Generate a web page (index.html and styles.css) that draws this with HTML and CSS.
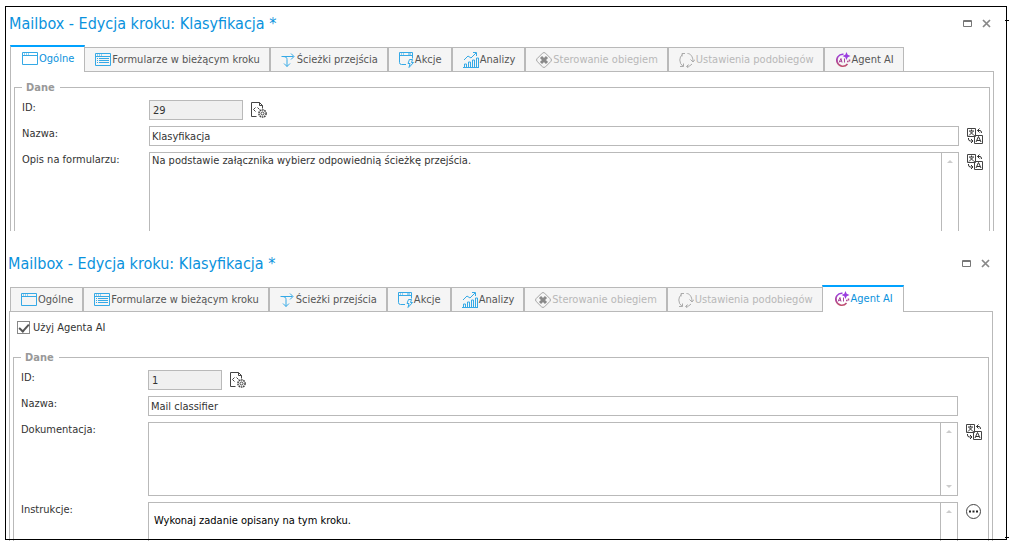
FILE: index.html
```html
<!DOCTYPE html>
<html lang="pl">
<head>
    <meta charset="UTF-8">
    <meta name="viewport" content="width=device-width, initial-scale=1.0">
    <title>Mailbox - Edycja kroku: Klasyfikacja</title>
    <link rel="stylesheet" href="styles.css">
</head>
<body>
    <svg class="sprite" aria-hidden="true">
        <symbol id="i-window" viewBox="0 0 16 14">
            <path d="M.5 .5h15v12H.5zM.5 3.5h15" fill="none" stroke="#35a9e6"/>
            <path d="M2 2h1M4 2h1M6 2h1" stroke="#35a9e6"/>
        </symbol>
        <symbol id="i-form" viewBox="0 0 16 14">
            <path d="M.5 .5h15v12H.5zM.5 3.500h15" fill="none" stroke="#35a9e6"/>
            <path d="M2 2h1M4 2h1M6 2h1M2 5.500h1M4 5.500h10M2 7.500h1M4 7.500h10M2 9.500h1M4 9.500h10" stroke="#35a9e6"/>
        </symbol>
        <symbol id="i-path" viewBox="0 0 15 16">
            <path d="M.5 4.500h12M10 1.500l3 3-3 3M2 4.500c3 0 4 1 4 3v7M3 11.500l3 3 3-3" fill="none" stroke="#35a9e6"/>
        </symbol>
        <symbol id="i-action" viewBox="0 0 15 16">
            <path d="M7 12.500H2.500Q.5 12.500 .5 10.500V.5h13v6M.5 3.500h13M2 2h1M4 2h1M9 2h3" fill="none" stroke="#35a9e6"/>
            <path d="M10.500 7.500h3l-1 3h2l-4.500 5 1-4H9z" fill="none" stroke="#35a9e6"/>
        </symbol>
        <symbol id="i-chart" viewBox="0 0 16 16">
            <path d="M0 15.500h16M1.500 15v-3h2v3M5.500 15v-5h2v5M9.500 15V8h2v7M13.500 15V6h2v9" fill="none" stroke="#35a9e6"/>
            <path d="M1 8l4-4 3 2 5-5M10 .5h3.500V4" fill="none" stroke="#35a9e6"/>
        </symbol>
        <symbol id="i-flow" viewBox="0 0 16 16">
            <path d="M6.500 1.200q1.500-1.400 3 0l5.300 5.300q1.400 1.500 0 3l-5.300 5.300q-1.500 1.400-3 0L1.200 9.500q-1.400-1.500 0-3z" fill="none" stroke="#a5a5a5"/>
            <path d="M5 5l6 6M11 5l-6 6" stroke="#8a8a8a" stroke-width="3"/>
        </symbol>
        <symbol id="i-cycle" viewBox="0 0 16 16">
            <path d="M6 1.500l-3 0v3M3.500 2.500A7 7 0 0 0 .8 8q0 4 3.200 6.300M1 14.500h3.500v-3M8.500 1.500c3 0 5.500 3 5.500 8M11.500 7.500l2.500 2.500 2-2.500M13 12q-2 2.500-5 2.500M9.500 12.500l-2 2 2 1.500" fill="none" stroke="#aaa"/>
        </symbol>
        <symbol id="i-ai" viewBox="0 0 16 16">
            <linearGradient id="ai-fill" x1="0" y1="0" x2="0" y2="1">
                <stop offset="0" stop-color="#9a3de0"/>
                <stop offset="1" stop-color="#c04f6c"/>
            </linearGradient>
            <path d="M8.500 2.300A6 6 0 1 0 12.500 12" fill="none" stroke="url(#ai-fill)" stroke-width="1.600"/>
            <path d="M4 10.500l2-4 1 4M4.800 9.300h2M9.500 6.500v4" fill="none" stroke="#a8479c"/>
            <path d="M11.500 0l1.200 2.800L15.500 4l-2.800 1.200L11.500 8l-1.200-2.800L7.500 4l2.800-1.200z" fill="#9a3de0"/>
            <path d="M14.500 7.500v2M12 9.500h1.500" stroke="#b04d90" stroke-width="1.500"/>
        </symbol>
        <symbol id="i-file" viewBox="0 0 16 16">
            <path d="M5.500 14.500h-5V.5h8l3 3v3M8.500 .5v3h3" fill="none" stroke="#444"/>
            <path d="M4.500 5.500L2.500 7.500l2 2M6.500 5.500l2 2" fill="none" stroke="#444"/>
            <circle cx="11.500" cy="11.500" r="3.600" fill="#fff" stroke="#444" stroke-width="1.500" stroke-dasharray="1.600 .7"/>
            <circle cx="11.500" cy="11.500" r="1.500" fill="none" stroke="#444"/>
        </symbol>
        <symbol id="i-translate" viewBox="0 0 16 16">
            <path d="M.5 .5h8v8h-8zM7.500 7.500h8v8h-8z" fill="#fff" stroke="#444"/>
            <path d="M2 3h5M4.500 1.500V3M6 3.500l-4 4M3 3.500l4 4" fill="none" stroke="#333"/>
            <path d="M9 14l2.500-5.500L14 14M10 12.500h3" fill="none" stroke="#333"/>
            <path d="M12.500 .5l-2 2 2 2M10.500 2.500h2.500q1.500 0 1.500 2.500M1.500 10v1q0 2 2 2h2M4 11l2 2-2 2" fill="none" stroke="#333"/>
        </symbol>
        <symbol id="i-more" viewBox="0 0 16 16">
            <circle cx="7.500" cy="7.500" r="7" fill="#fff" stroke="#444"/>
            <path d="M3 7.500h2M6.500 7.500h2M10 7.500h2" stroke="#222" stroke-width="2"/>
        </symbol>
        <symbol id="i-max" viewBox="0 0 9 9">
            <path d="M.5 1.500h8v6h-8zM.5 2.500h8" fill="none" stroke="#777"/>
        </symbol>
        <symbol id="i-close" viewBox="0 0 9 9">
            <path d="M1 1l7 7M8 1L1 8" stroke="#888" stroke-width="1.700"/>
        </symbol>
    </svg>

    <div class="frame">
        <section class="window">
            <header class="titlebar">
                <h1>Mailbox - Edycja kroku: Klasyfikacja *</h1>
                <button class="win-btn" type="button" aria-label="Maksymalizuj"><svg><use href="#i-max"/></svg></button>
                <button class="win-btn" type="button" aria-label="Zamknij"><svg><use href="#i-close"/></svg></button>
            </header>
            <nav class="tabs">
                <button class="tab active" type="button"><svg><use href="#i-window"/></svg>Ogólne</button>
                <button class="tab" type="button"><svg><use href="#i-form"/></svg>Formularze w bieżącym kroku</button>
                <button class="tab" type="button"><svg class="narrow"><use href="#i-path"/></svg>Ścieżki przejścia</button>
                <button class="tab" type="button"><svg class="narrow"><use href="#i-action"/></svg>Akcje</button>
                <button class="tab" type="button"><svg><use href="#i-chart"/></svg>Analizy</button>
                <button class="tab" type="button" disabled><svg><use href="#i-flow"/></svg>Sterowanie obiegiem</button>
                <button class="tab" type="button" disabled><svg><use href="#i-cycle"/></svg>Ustawienia podobiegów</button>
                <button class="tab" type="button"><svg><use href="#i-ai"/></svg>Agent AI</button>
            </nav>
            <div class="panel">
                <fieldset>
                    <legend>Dane</legend>
                    <div class="row">
                        <label for="step-id">ID:</label>
                        <div class="inline">
                            <input class="id-long" id="step-id" type="text" value="29" readonly>
                            <button class="icon-btn" type="button" aria-label="Identyfikator"><svg><use href="#i-file"/></svg></button>
                        </div>
                    </div>
                    <div class="row">
                        <label for="step-name">Nazwa:</label>
                        <input id="step-name" type="text" value="Klasyfikacja">
                        <button class="icon-btn" type="button" aria-label="Tłumacz nazwę"><svg><use href="#i-translate"/></svg></button>
                    </div>
                    <div class="row">
                        <label for="step-desc">Opis na formularzu:</label>
                        <div class="memo memo-open">
                            <textarea id="step-desc">Na podstawie załącznika wybierz odpowiednią ścieżkę przejścia.</textarea>
                            <div class="scroll"><i class="up"></i></div>
                        </div>
                        <button class="icon-btn" type="button" aria-label="Tłumacz opis"><svg><use href="#i-translate"/></svg></button>
                    </div>
                </fieldset>
            </div>
        </section>

        <section class="window second">
            <header class="titlebar">
                <h1>Mailbox - Edycja kroku: Klasyfikacja *</h1>
                <button class="win-btn" type="button" aria-label="Maksymalizuj"><svg><use href="#i-max"/></svg></button>
                <button class="win-btn" type="button" aria-label="Zamknij"><svg><use href="#i-close"/></svg></button>
            </header>
            <nav class="tabs">
                <button class="tab" type="button"><svg><use href="#i-window"/></svg>Ogólne</button>
                <button class="tab" type="button"><svg><use href="#i-form"/></svg>Formularze w bieżącym kroku</button>
                <button class="tab" type="button"><svg class="narrow"><use href="#i-path"/></svg>Ścieżki przejścia</button>
                <button class="tab" type="button"><svg class="narrow"><use href="#i-action"/></svg>Akcje</button>
                <button class="tab" type="button"><svg><use href="#i-chart"/></svg>Analizy</button>
                <button class="tab" type="button" disabled><svg><use href="#i-flow"/></svg>Sterowanie obiegiem</button>
                <button class="tab" type="button" disabled><svg><use href="#i-cycle"/></svg>Ustawienia podobiegów</button>
                <button class="tab active" type="button"><svg><use href="#i-ai"/></svg>Agent AI</button>
            </nav>
            <div class="panel">
                <label class="check"><input type="checkbox" checked>Użyj Agenta AI</label>
                <fieldset>
                    <legend>Dane</legend>
                    <div class="row">
                        <label for="agent-id">ID:</label>
                        <div class="inline">
                            <input class="id-short" id="agent-id" type="text" value="1" readonly>
                            <button class="icon-btn" type="button" aria-label="Identyfikator"><svg><use href="#i-file"/></svg></button>
                        </div>
                    </div>
                    <div class="row">
                        <label for="agent-name">Nazwa:</label>
                        <input id="agent-name" type="text" value="Mail classifier">
                    </div>
                    <div class="row">
                        <label for="agent-doc">Dokumentacja:</label>
                        <div class="memo">
                            <textarea id="agent-doc"></textarea>
                            <div class="scroll"><i class="up"></i><i class="down"></i></div>
                        </div>
                        <button class="icon-btn" type="button" aria-label="Tłumacz dokumentację"><svg><use href="#i-translate"/></svg></button>
                    </div>
                    <div class="row">
                        <label for="agent-prompt">Instrukcje:</label>
                        <div class="memo memo-open prompt">
                            <textarea id="agent-prompt">Wykonaj zadanie opisany na tym kroku.</textarea>
                            <div class="scroll"><i class="up"></i></div>
                        </div>
                        <button class="icon-btn" type="button" aria-label="Więcej"><svg><use href="#i-more"/></svg></button>
                    </div>
                </fieldset>
            </div>
        </section>
    </div>
</body>
</html>
```
FILE: styles.css
```css
* {
    box-sizing: border-box;
}
body {
    margin: 0;
    background: #fff;
    color: #333;
    font: 11px/15px "DejaVu Sans Condensed", "DejaVu Sans", sans-serif;
    overflow: hidden;
}
button, input, textarea {
    font: inherit;
    color: inherit;
    margin: 0;
}
button {
    background: none;
    border: none;
    padding: 0;
}
.sprite {
    position: absolute;
    width: 0;
    height: 0;
}

/* black outline drawn on top of both windows */
.frame {
    position: relative;
    height: 100vh;
}
.frame::before {
    content: "";
    position: absolute;
    inset: 6px 2px 1px 5px;
    border: 1px solid #000;
    pointer-events: none;
    z-index: 2;
}
.frame::after {
    content: "";
    position: absolute;
    top: 20px;
    right: 0;
    bottom: 3px;
    width: 4px;
    border: solid #000;
    border-width: 1px 0;
    pointer-events: none;
}

.window {
    padding: 0 15px 0 10px;
}
.second {
    padding: 0 16px 0 9px;
    margin-top: 9px;
}
.titlebar {
    display: flex;
    align-items: center;
    gap: 10px;
    height: 45px;
    padding: 2px 3px 0 0;
    margin-left: -1px;
}
h1 {
    flex: 1;
    margin: 0;
    font-size: 16px;
    line-height: 20px;
    font-weight: normal;
    color: #0a92dd;
}
.win-btn, .win-btn svg {
    display: block;
    width: 9px;
    height: 9px;
}

.tabs {
    display: flex;
    align-items: flex-end;
    height: 26px;
    padding: 0 1px;
}
.tab {
    display: flex;
    align-items: center;
    gap: 1px;
    height: 24px;
    padding: 0 9px 0 10px;
    background: #f5f5f5;
    border: 1px solid #b9b9b9;
    border-bottom: none;
    color: #555;
    white-space: nowrap;
}
.tab svg {
    width: 16px;
    height: 16px;
}
.tab svg.narrow {
    width: 15px;
}
.tab:disabled {
    color: #b8b8b8;
}
.tab.active {
    position: relative;
    height: 27px;
    margin: 0 -1px -1px;
    padding: 0 10px 2px 11px;
    background: #fff;
    border-top: 2px solid #00a2ff;
    color: #0a92dd;
}

.panel {
    border: 1px solid #b9b9b9;
    border-bottom: none;
    padding: 8px 3px 0;
}
.check {
    display: flex;
    align-items: center;
    gap: 3px;
    margin: 0 0 15px 4px;
}
.check input {
    appearance: none;
    width: 13px;
    height: 13px;
    border: 1px solid #888;
    background: #fff;
    display: grid;
    place-items: center;
}
.check input:checked::before {
    content: "";
    width: 8px;
    height: 4px;
    border: solid #555;
    border-width: 0 0 2px 2px;
    transform: rotate(-48deg);
    margin-bottom: 2px;
}
fieldset {
    margin: 0;
    padding: 5px 6px 0 7px;
    border: 1px solid #b9b9b9;
    border-bottom: none;
    min-width: 0;
}
legend {
    padding: 0 5px 0 4px;
    font-weight: bold;
    color: #999;
}
.row {
    display: grid;
    grid-template-columns: 127px 1fr 24px;
    align-items: start;
}
.row + .row {
    margin-top: 6px;
}
.inline {
    display: flex;
}
input[type="text"] {
    width: 100%;
    height: 20px;
    padding: 0 2px;
    border: 1px solid #b9b9b9;
    background: #fff;
}
input[readonly] {
    background: #f0f0f0;
    padding: 0 3px;
}
input.id-long {
    width: 94px;
}
input.id-short {
    width: 74px;
}
.icon-btn {
    width: 16px;
    height: 16px;
    margin: 2px 0 0 8px;
}
.icon-btn svg {
    display: block;
    width: 16px;
    height: 16px;
}

.memo {
    display: flex;
    height: 74px;
    border: 1px solid #b9b9b9;
}
.memo textarea {
    flex: 1;
    min-width: 0;
    padding: 0 2px;
    border: none;
    background: none;
    resize: none;
    overflow: hidden;
}
.memo-open {
    height: 79px;
    border-bottom: none;
}
.scroll {
    display: flex;
    flex-direction: column;
    justify-content: space-between;
    align-items: center;
    width: 17px;
    padding: 7px 0;
    border-left: 1px solid #b9b9b9;
}
.scroll i {
    border: 3px solid transparent;
}
.scroll .up {
    border-top: none;
    border-bottom-color: #ccc;
}
.scroll .down {
    border-bottom: none;
    border-top-color: #ccc;
}
.prompt {
    height: 39px;
}
.prompt textarea {
    padding: 10px 5px 0;
    color: #000;
}
```
